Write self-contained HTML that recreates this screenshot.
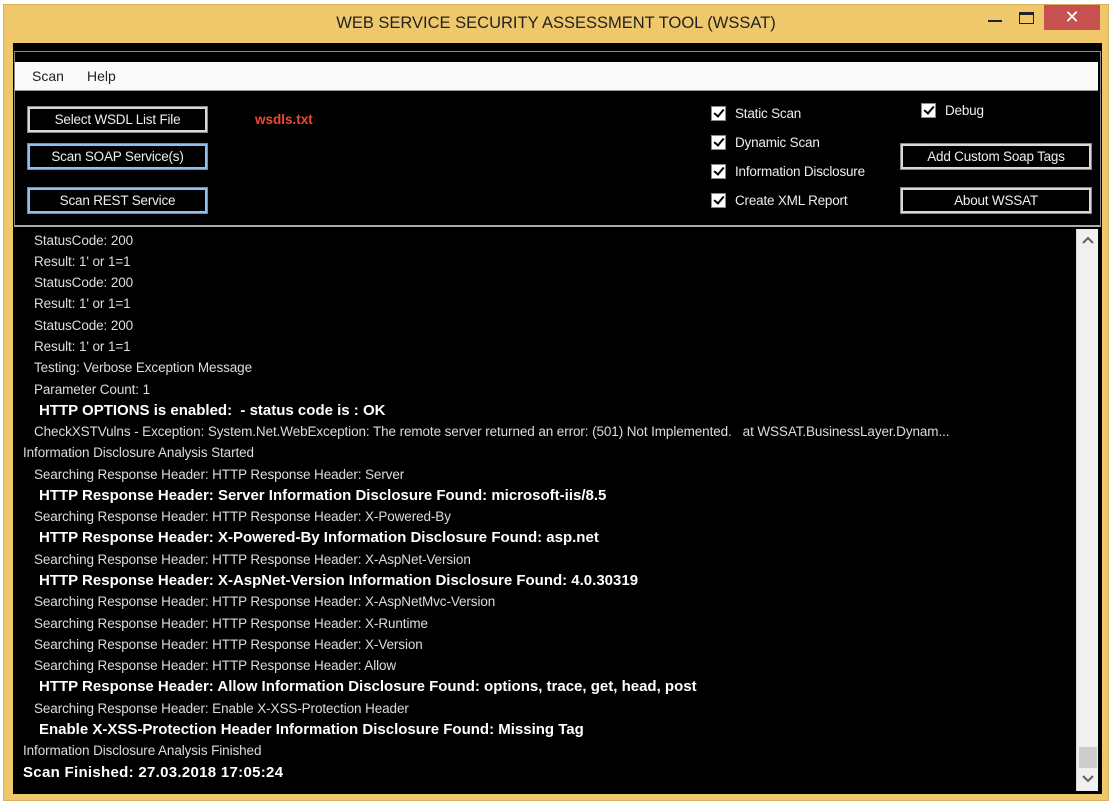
<!DOCTYPE html>
<html><head><meta charset="utf-8"><style>
*{margin:0;padding:0;box-sizing:border-box}
body{width:1115px;height:801px;overflow:hidden;background:#fff;font-family:"Liberation Sans",sans-serif;position:relative}
.win{position:absolute;left:3px;top:4px;width:1106px;height:797px;background:#f0c86c;border:1px solid #d8b060}
.title{position:absolute;left:0;top:14px;width:1112px;text-align:center;font-size:16.5px;color:#222}
.close{position:absolute;left:1044px;top:5px;width:56px;height:25px;background:#c75050;color:#fff;font-size:18px;text-align:center;line-height:25px}
.min{position:absolute;left:988px;top:20px;width:14px;height:2px;background:#222}
.max{position:absolute;left:1019px;top:12px;width:15px;height:12px;border:1px solid #222;border-top-width:3px}
.black{position:absolute;left:13px;top:43px;width:1089px;height:751px;background:#000}
.menu{position:absolute;left:15px;top:62px;width:1083px;height:29px;background:#fafafa;border-bottom:1px solid #999}
.menu span{position:absolute;top:6px;font-size:14px;color:#222}
.panel{position:absolute;left:14px;top:51px;width:1087px;height:176px;border:1px solid #888;border-bottom:2px solid #aaa}
.btn{position:absolute;height:25px;border:2px solid #d8d8d8;outline:1px solid #888;color:#eee;font-size:13.5px;text-align:center;line-height:21px;background:#000;letter-spacing:-0.2px}
.btn.blue{border-color:#8ec0f0}
.cb{position:absolute;font-size:13.5px;color:#eee;letter-spacing:-0.2px}
.cb i{position:absolute;left:-24px;top:0px;width:15px;height:15px;background:#fff;border:1px solid #888}
.cb i:after{content:"";position:absolute;left:4px;top:0px;width:4px;height:8px;border:solid #000;border-width:0 2.5px 2.5px 0;transform:rotate(40deg)}
.log{position:absolute;left:15px;top:230px;width:1061px;height:562px;color:#ddd;font-size:13.5px;letter-spacing:-0.1px}
.log div{position:absolute;white-space:nowrap;height:21px}
.log .b{font-weight:bold;color:#fff;font-size:15px;letter-spacing:0;top:-1px}
.sb{position:absolute;left:1076px;top:229px;width:22px;height:562px;background:#f0f0f0;border-left:1px solid #ddd}
</style></head><body>
<div class="win"></div>
<div class="title">WEB SERVICE SECURITY ASSESSMENT TOOL (WSSAT)</div>
<div class="min"></div><div class="max"></div>
<div class="close">✕</div>
<div class="black"></div>
<div class="panel"></div>
<div class="menu"><span style="left:17px">Scan</span><span style="left:72px">Help</span></div>
<div class="btn" style="left:28px;top:107px;width:179px">Select WSDL List File</div>
<div class="btn blue" style="left:28px;top:144px;width:179px">Scan SOAP Service(s)</div>
<div class="btn blue" style="left:28px;top:188px;width:179px">Scan REST Service</div>
<div style="position:absolute;left:255px;top:112px;color:#f04830;font-weight:bold;font-size:13.5px">wsdls.txt</div>
<div class="cb" style="left:735px;top:106px"><i></i>Static Scan</div>
<div class="cb" style="left:735px;top:135px"><i></i>Dynamic Scan</div>
<div class="cb" style="left:735px;top:164px"><i></i>Information Disclosure</div>
<div class="cb" style="left:735px;top:193px"><i></i>Create XML Report</div>
<div class="cb" style="left:945px;top:103px"><i></i>Debug</div>
<div class="btn" style="left:901px;top:144px;width:190px">Add Custom Soap Tags</div>
<div class="btn" style="left:901px;top:188px;width:190px">About WSSAT</div>
<div class="log">
<div style="left:19px;top:3px">StatusCode: 200</div>
<div style="left:19px;top:24px">Result: 1' or 1=1</div>
<div style="left:19px;top:45px">StatusCode: 200</div>
<div style="left:19px;top:66px">Result: 1' or 1=1</div>
<div style="left:19px;top:88px">StatusCode: 200</div>
<div style="left:19px;top:109px">Result: 1' or 1=1</div>
<div style="left:19px;top:130px">Testing: Verbose Exception Message</div>
<div style="left:19px;top:152px">Parameter Count: 1</div>
<div class="b" style="left:24px;top:172px">HTTP OPTIONS is enabled:&nbsp; - status code is : OK</div>
<div style="left:19px;top:194px">CheckXSTVulns - Exception: System.Net.WebException: The remote server returned an error: (501) Not Implemented.&nbsp;&nbsp; at WSSAT.BusinessLayer.Dynam...</div>
<div style="left:8px;top:215px">Information Disclosure Analysis Started</div>
<div style="left:19px;top:237px">Searching Response Header: HTTP Response Header: Server</div>
<div class="b" style="left:24px;top:257px">HTTP Response Header: Server Information Disclosure Found: microsoft-iis/8.5</div>
<div style="left:19px;top:279px">Searching Response Header: HTTP Response Header: X-Powered-By</div>
<div class="b" style="left:24px;top:299px">HTTP Response Header: X-Powered-By Information Disclosure Found: asp.net</div>
<div style="left:19px;top:322px">Searching Response Header: HTTP Response Header: X-AspNet-Version</div>
<div class="b" style="left:24px;top:342px">HTTP Response Header: X-AspNet-Version Information Disclosure Found: 4.0.30319</div>
<div style="left:19px;top:364px">Searching Response Header: HTTP Response Header: X-AspNetMvc-Version</div>
<div style="left:19px;top:386px">Searching Response Header: HTTP Response Header: X-Runtime</div>
<div style="left:19px;top:407px">Searching Response Header: HTTP Response Header: X-Version</div>
<div style="left:19px;top:428px">Searching Response Header: HTTP Response Header: Allow</div>
<div class="b" style="left:24px;top:448px">HTTP Response Header: Allow Information Disclosure Found: options, trace, get, head, post</div>
<div style="left:19px;top:471px">Searching Response Header: Enable X-XSS-Protection Header</div>
<div class="b" style="left:24px;top:491px">Enable X-XSS-Protection Header Information Disclosure Found: Missing Tag</div>
<div style="left:8px;top:513px">Information Disclosure Analysis Finished</div>
<div class="b" style="left:8px;top:534px;letter-spacing:0.3px">Scan Finished: 27.03.2018 17:05:24</div>
</div>
<div class="sb">
<svg width="22" height="562" style="position:absolute;left:0;top:0"><path d="M6 14 L11 9 L16 14" stroke="#606060" stroke-width="2" fill="none"/><rect x="2" y="518" width="18" height="21" fill="#cdcdcd"/><path d="M6 547 L11 552 L16 547" stroke="#606060" stroke-width="2" fill="none"/></svg>
</div>
</body></html>
